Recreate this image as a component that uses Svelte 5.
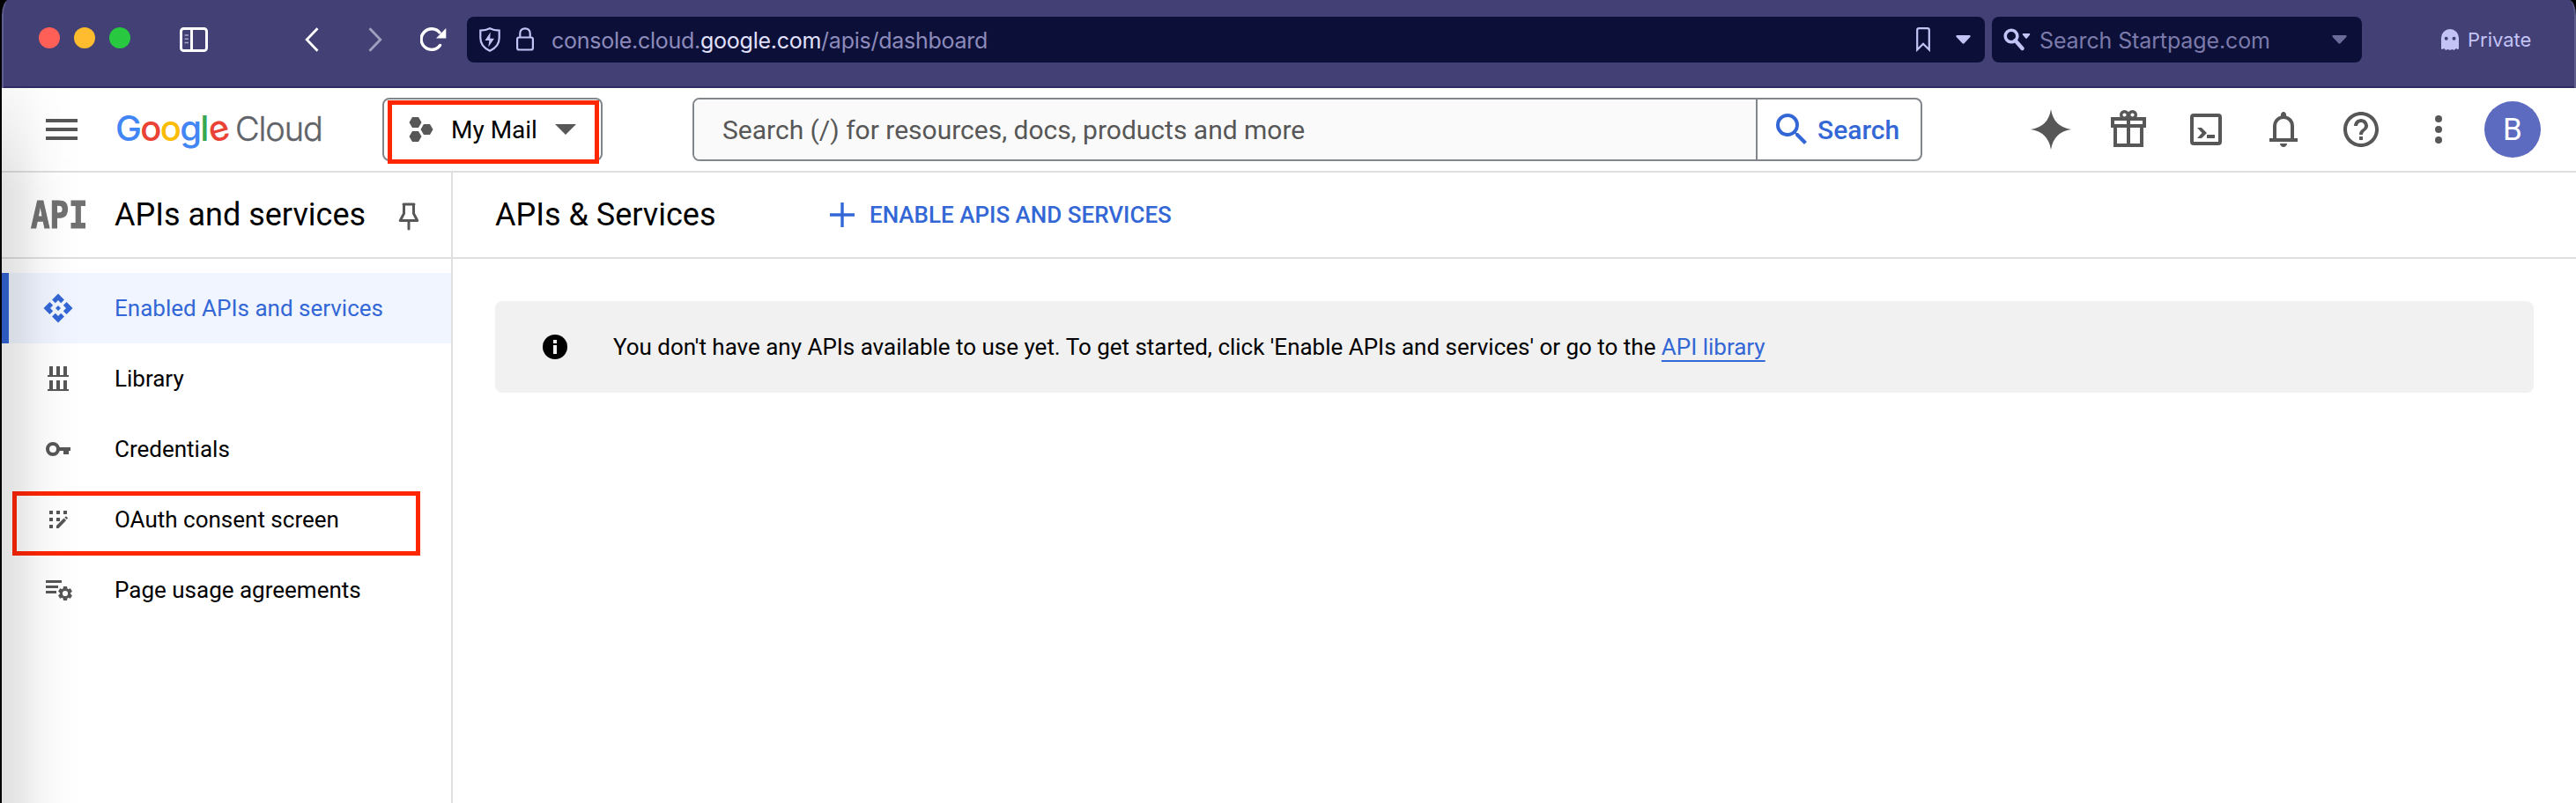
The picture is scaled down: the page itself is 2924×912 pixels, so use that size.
<script>
  const navItems = [
    { label: 'Enabled APIs and services', icon: 'api', active: true },
    { label: 'Library', icon: 'library' },
    { label: 'Credentials', icon: 'key' },
    { label: 'OAuth consent screen', icon: 'consent', marked: true },
    { label: 'Page usage agreements', icon: 'agreements' }
  ];
  const gearTeeth = [0, 60, 120];
</script>

<div class="window">
  <header class="chrome">
    <div class="lights"><i class="red"></i><i class="amber"></i><i class="green"></i></div>
    <svg class="panel" width="32" height="28" viewBox="0 0 32 28">
      <rect x="1.5" y="1.5" width="29" height="25" rx="3" fill="none" stroke="#fff" stroke-width="3" />
      <path d="M13.5 1v26" stroke="#fff" stroke-width="3" />
      <path d="M5.5 9h4.500M5.500 13.300h4.500M5.500 17.500h4.500" stroke="#a7a5c6" stroke-width="1.600" />
    </svg>
    <svg class="back" width="16" height="28" viewBox="0 0 16 28" fill="none" stroke="#fff" stroke-width="2.800"><path d="M14.500 1.200 2.200 14l12.300 12.800" /></svg>
    <svg class="fwd" width="16" height="28" viewBox="0 0 16 28" fill="none" stroke="#a09fbd" stroke-width="2.800"><path d="M1.500 1.200 13.800 14 1.500 26.800" /></svg>
    <svg class="reload" width="30" height="28" viewBox="0 0 30 28">
      <path d="M22.500 20.500A11.800 11.800 0 1 1 22 6" fill="none" stroke="#fff" stroke-width="3.400" stroke-linecap="round" />
      <path d="M29.300 1v11.500H18z" fill="#fff" />
    </svg>
    <div class="urlbar">
      <svg width="24" height="28" viewBox="0 0 24 28">
        <path d="M12 1.300c3.200 1.700 6.600 2.300 10.700 2.300V12c0 7-4 11.700-10.700 14.700C5.300 23.700 1.300 19 1.300 12V3.600C5.400 3.600 8.800 3 12 1.300z" fill="none" stroke="#c3c3f5" stroke-width="2.200" />
        <path d="M12.800 5.500 6.500 15h4.800l-1 7.500L17 12.700h-4.800z" fill="#c3c3f5" />
      </svg>
      <svg class="lock" width="20" height="28" viewBox="0 0 20 28" fill="none" stroke="#c3c3f5" stroke-width="2.200">
        <rect x="1.100" y="11.500" width="17.800" height="14" rx="2" /><path d="M4.300 11.500V7c0-3.400 2.300-5.700 5.700-5.700S15.700 3.600 15.700 7v4.500" />
      </svg>
      <span class="url">console.cloud.<b>google.com</b>/apis/dashboard</span>
      <svg class="mark" width="16" height="28" viewBox="0 0 16 28" fill="none" stroke="#c3c3f5" stroke-width="2.200"><path d="M1.200 25.500V3.200q0-2 2-2h9.600q2 0 2 2v22.300L8 18.700z" /></svg>
      <svg width="17" height="10" viewBox="0 0 17 10" fill="#c3c3f5"><path d="M1.500 0h14q1.800.3.800 2L9.500 9.300q-1 .9-2 0L.7 2q-1-1.700.8-2z" /></svg>
    </div>
    <div class="quick">
      <svg width="31" height="26" viewBox="0 0 31 26">
        <circle cx="9" cy="9" r="6.800" fill="none" stroke="#c3c3f5" stroke-width="3.600" />
        <path d="m13.500 14 8 9" stroke="#c3c3f5" stroke-width="4.400" stroke-linecap="round" />
        <path d="M22.500 6h7q1.300.2.500 1.500L26.800 11.500q-.8.800-1.600 0L21.900 7.500Q21.300 6.200 22.500 6z" fill="#c3c3f5" />
      </svg>
      <span>Search Startpage.com</span>
      <svg width="17" height="10" viewBox="0 0 17 10" fill="#6b6b9a"><path d="M1.500 0h14q1.800.3.800 2L9.500 9.300q-1 .9-2 0L.7 2q-1-1.700.8-2z" /></svg>
    </div>
    <div class="private">
      <svg width="20" height="24" viewBox="0 0 20 24">
        <path d="M0 10a10 10 0 0 1 20 0v12.500l-1.200.5-2-1-2 2-2.300-1-2.500 1-2.500-1-2.300 1-2-2-2 1L0 22.500z" fill="#c3c3f5" />
        <circle cx="5.700" cy="10.700" r="2" fill="#424075" /><circle cx="14.500" cy="10.700" r="2" fill="#424075" />
      </svg>
      <span>Private</span>
    </div>
  </header>

  <div class="page">
    <header class="topbar">
      <svg class="burger" width="36" height="24" viewBox="0 0 36 24" fill="#575757"><path d="M0 0h36v4H0zM0 10h36v4H0zM0 20h36v4H0z" /></svg>
      <div class="logo"><span class="goog"><span class="b">G</span><span class="r">o</span><span class="y">o</span><span class="b">g</span><span class="g">l</span><span class="r e">e</span></span><span class="cloud">Cloud</span></div>
      <div class="project">
        <svg width="28" height="28" viewBox="0 0 28 28" fill="#575757">
          <path d="M4 0h7l3.500 6-3.500 6H4L.5 6zM17 8h7l3.500 6-3.500 6h-7l-3.500-6zM4 16h7l3.500 6-3.500 6H4L.5 22z" />
        </svg>
        <span>My Mail</span>
        <svg class="caret" width="24" height="12" viewBox="0 0 24 12" fill="#575757"><path d="M0 0h24L12 12z" /></svg>
        <div class="outline"></div>
      </div>
      <div class="search">
        <div class="field">Search (/) for resources, docs, products and more</div>
        <div class="go">
          <svg width="48" height="48" viewBox="0 0 24 24" fill="#3367d6"><path d="M15.500 14h-.79l-.28-.27A6.471 6.471 0 0 0 16 9.500 6.500 6.500 0 1 0 9.500 16c1.610 0 3.090-.59 4.230-1.570l.27.28v.79l5 4.990L20.490 19l-4.990-5zm-6 0C7.010 14 5 11.990 5 9.500S7.010 5 9.500 5 14 7.010 14 9.500 11.990 14 9.500 14z" /></svg>
          <span>Search</span>
        </div>
      </div>
      <div class="tools">
        <svg width="48" height="48" viewBox="0 0 48 48"><path d="M24 1Q27 21 47 24 27 27 24 47 21 27 1 24 21 21 24 1z" fill="#575757" /></svg>
        <svg width="48" height="48" viewBox="0 0 48 48" fill="none" stroke="#575757" stroke-width="4">
          <path d="M6 12h36v8H6zM9 20v22h30V20M24 12v30" /><circle cx="19.500" cy="7.500" r="3.800" stroke-width="3.400" /><circle cx="28.500" cy="7.500" r="3.800" stroke-width="3.400" />
        </svg>
        <svg width="48" height="48" viewBox="0 0 48 48">
          <rect x="8" y="8" width="32" height="32" rx="2" fill="none" stroke="#575757" stroke-width="4" />
          <path d="M14 22h5l6 6-6 6h-5l5.500-6zM25 30h9v4h-9z" fill="#575757" />
        </svg>
        <svg width="48" height="48" viewBox="0 0 24 24" fill="#575757"><path fill-rule="evenodd" d="M4 19v-2h2v-7q0-2.075 1.250-3.687Q8.500 4.700 10.500 4.200v-.7q0-.625.438-1.062Q11.375 2 12 2t1.063.438q.437.437.437 1.062v.7q2 .5 3.250 2.112Q18 7.925 18 10v7h2v2ZM12 22q-.825 0-1.412-.587Q10 20.825 10 20h4q0 .825-.587 1.413Q12.825 22 12 22ZM8 17h8v-7q0-1.650-1.175-2.825Q13.650 6 12 6q-1.650 0-2.825 1.175Q8 8.350 8 10Z" /></svg>
        <svg width="48" height="48" viewBox="0 0 24 24" fill="#575757"><path d="M11 18h2v-2h-2v2zm1-16C6.480 2 2 6.480 2 12s4.480 10 10 10 10-4.480 10-10S17.520 2 12 2zm0 18c-4.410 0-8-3.590-8-8s3.590-8 8-8 8 3.590 8 8-3.590 8-8 8zm0-14c-2.210 0-4 1.790-4 4h2c0-1.100.9-2 2-2s2 .9 2 2c0 2-3 1.750-3 5h2c0-2.250 3-2.500 3-5 0-2.210-1.790-4-4-4z" /></svg>
        <svg width="48" height="48" viewBox="0 0 48 48" fill="#575757"><circle cx="24" cy="12" r="4" /><circle cx="24" cy="24" r="4" /><circle cx="24" cy="36" r="4" /></svg>
      </div>
      <div class="avatar">B</div>
    </header>

    <div class="body">
      <aside>
        <div class="product">
          <div class="apilogo"><span>API</span></div>
          <h2>APIs and services</h2>
          <svg width="24" height="32" viewBox="0 0 24 32" fill="none" stroke="#575757" stroke-width="3" stroke-linejoin="round" stroke-linecap="round">
            <path d="M6 2h12M6.500 2v10.500L2.300 20.500h19.400L17.500 12.500V2M12 21v9" />
          </svg>
        </div>
        <nav>
          {#each navItems as item}
            <div class="item" class:active={item.active}>
              <svg width="36" height="36" viewBox="0 0 36 36">
                {#if item.icon === 'api'}
                  <path transform="scale(1.500)" fill="#3367d6" d="M14 12l-2 2-2-2 2-2zM12 6l2.120 2.120 2.500-2.500L12 1 7.380 5.620l2.500 2.500zM6 12l2.120-2.120-2.500-2.500L1 12l4.620 4.620 2.500-2.500zM18 12l-2.120 2.120 2.500 2.500L23 12l-4.620-4.620-2.500 2.500zM12 18l-2.120-2.120-2.500 2.500L12 23l4.620-4.620-2.500-2.500z" />
                {:else if item.icon === 'library'}
                  <path fill="#575757" d="M6 14h24v2H6zM8 4h4v10H8zM16 4h4v10h-4zM24 4h4v10h-4zM6 30h24v2H6zM8 20h4v10H8zM16 20h4v10h-4zM24 20h4v10h-4z" />
                {:else if item.icon === 'key'}
                  <circle cx="12" cy="18" r="6" fill="none" stroke="#575757" stroke-width="4" />
                  <path fill="#575757" d="M18 16h14v4h-2v4h-6v-4h-6z" />
                {:else if item.icon === 'consent'}
                  <path fill="#575757" d="M8 8h4v4H8zM16 8h4v4h-4zM24 8h4v4h-4zM8 16h4v4H8zM16 16h4v4h-4zM8 24h4v4H8zM16 28v-3l8.500-8.500 2.600 2.600L18.500 28zM25.300 15.800l1-1q.7-.6 1.300 0l1 1q.6.600 0 1.300l-.8.900z" />
                {:else}
                  <path fill="#575757" d="M4 7h18v3H4zM4 13h14v3H4zM4 19h12v3H4z" />
                  <circle cx="26" cy="22" r="4.600" fill="none" stroke="#575757" stroke-width="3" />
                  {#each gearTeeth as angle}
                    <path fill="#575757" transform="rotate({angle} 26 22)" d="M24 14h4l.6 3h-5.200zM24 30h4l.6-3h-5.200z" />
                  {/each}
                {/if}
              </svg>
              <span>{item.label}</span>
              {#if item.marked}<div class="outline"></div>{/if}
            </div>
          {/each}
        </nav>
      </aside>

      <main>
        <div class="titlebar">
          <h1>APIs &amp; Services</h1>
          <svg width="28" height="28" viewBox="0 0 28 28" fill="#3367d6"><path d="M12.300 0h3.400v12.300H28v3.400H15.700V28h-3.400V15.700H0v-3.400h12.300z" /></svg>
          <span class="enable">ENABLE APIS AND SERVICES</span>
        </div>
        <div class="notice">
          <svg width="28" height="28" viewBox="0 0 28 28"><circle cx="14" cy="14" r="14" fill="#000" /><path d="M12 6h4v4h-4zM12 12h4v10h-4z" fill="#f1f1f1" /></svg>
          <p>You don't have any APIs available to use yet. To get started, click 'Enable APIs and services' or go to the <a href="#library">API library</a></p>
        </div>
      </main>
    </div>
  </div>
</div>

<style>
  :global(body) { background: #000; overflow: hidden; }
  .window { box-sizing: border-box; height: 912px; padding-left: 2px; display: flex; flex-direction: column; font-family: Roboto, sans-serif; color: #000; }
  svg { display: block; flex: none; }
  h1, h2, p { margin: 0; font-weight: 400; white-space: nowrap; }
  span { white-space: nowrap; }

  .chrome { box-sizing: border-box; height: 100px; flex: none; display: flex; align-items: center; padding: 0 0 8px 40px; background: #424075; border: solid #605e8d; border-width: 0 2px; border-radius: 8px 8px 0 0 / 18px 18px 0 0; box-shadow: inset 0 -2px #2f2c63; font-family: Inter, sans-serif; }
  .chrome > svg { position: relative; top: -1px; }
  .lights { display: flex; gap: 16px; position: relative; top: -3px; }
  .lights i { width: 24px; height: 24px; border-radius: 50%; }
  .red { background: #ff5f57; }
  .amber { background: #febc2e; }
  .green { background: #28c840; }
  .panel { margin-left: 56px; }
  .back { margin-left: 110px; }
  .fwd { margin-left: 56px; }
  .reload { margin-left: 43px; }
  .urlbar, .quick { box-sizing: border-box; height: 52px; display: flex; align-items: center; background: #0c1038; border-radius: 8px; position: relative; top: -1px; }
  .urlbar { width: 1723px; margin-left: 23px; padding: 0 16px 0 14px; }
  .lock { margin-left: 18px; }
  .url { margin-left: 20px; padding-top: 2px; flex: 1; font-size: 25px; letter-spacing: -0.26px; color: #8d8bbb; }
  .url b { font-weight: 400; color: #e2e1fd; }
  .mark { margin-right: 29px; }
  .quick { width: 420px; margin-left: 8px; padding: 0 17px 0 13px; }
  .quick span { flex: 1; margin-left: 10px; padding-top: 2px; font-size: 25px; letter-spacing: -0.12px; color: #7b7aab; }
  .private { display: flex; align-items: center; margin-left: 90px; position: relative; top: -1px; color: #c3c3f5; }
  .private span { margin-left: 10px; font-size: 22px; }

  .page { flex: 1; min-height: 0; display: flex; flex-direction: column; background: #fff; position: relative; }
  .page::after { content: ''; position: absolute; inset: 0 auto 0 0; width: 90px; pointer-events: none; background: linear-gradient(90deg, rgba(0, 0, 0, 0.12), rgba(0, 0, 0, 0.085) 25%, rgba(0, 0, 0, 0.035) 50%, rgba(0, 0, 0, 0.01) 75%, transparent); -webkit-mask-image: linear-gradient(rgba(0, 0, 0, 0.25), #000 120px); mask-image: linear-gradient(rgba(0, 0, 0, 0.25), #000 120px); }

  .topbar { box-sizing: border-box; height: 96px; flex: none; display: flex; align-items: center; padding: 0 40px 0 50px; border-bottom: 2px solid #dfdfdf; }
  .logo { width: 235px; margin-left: 43px; display: flex; align-items: baseline; font-family: Inter, sans-serif; position: relative; top: -2px; }
  .goog { width: 136px; font-size: 40px; font-weight: 500; letter-spacing: -1.700px; }
  .cloud { font-size: 38px; font-weight: 300; letter-spacing: -1.100px; color: #5f6368; -webkit-text-stroke: 0.4px #5f6368; }
  .logo .b { color: #4285f4; }
  .logo .r { color: #ea4335; }
  .logo .y { color: #fbbc04; }
  .logo .g { color: #34a853; }
  .logo .e { display: inline-block; transform: rotate(-16deg); }
  .project { box-sizing: border-box; width: 250px; height: 72px; margin-left: 68px; display: flex; align-items: center; padding-left: 28px; border: 2px solid #80868b; border-radius: 8px; position: relative; font-size: 28px; }
  .project span { width: 97px; margin-left: 20px; }
  .caret { margin-left: 21px; }
  .outline { position: absolute; box-sizing: border-box; border: 5px solid #ff2600; }
  .project .outline { left: 4px; top: 1px; width: 240px; height: 72px; }
  .search { box-sizing: border-box; width: 1396px; height: 72px; margin-left: 102px; display: flex; border: 2px solid #80868b; border-radius: 8px; overflow: hidden; font-size: 30px; }
  .field { flex: 1; display: flex; align-items: center; padding-left: 32px; background: #fafafa; color: #575757; }
  .go { box-sizing: border-box; width: 187px; display: flex; align-items: center; padding-left: 15px; border-left: 2px solid #80868b; color: #3367d6; font-weight: 500; }
  .go span { margin-left: 5px; padding-top: 1px; }
  .tools { display: flex; gap: 40px; margin-left: 122px; }
  .avatar { width: 64px; height: 64px; margin-left: 28px; display: grid; place-items: center; border-radius: 50%; background: #5c6bc0; color: #fff; font-size: 35px; }

  .body { flex: 1; min-height: 0; display: grid; grid-template-columns: 512px 1fr; }
  aside { box-sizing: border-box; border-right: 2px solid #dfdfdf; }
  .product, .titlebar { box-sizing: border-box; height: 98px; display: flex; align-items: center; border-bottom: 2px solid #dfdfdf; }
  .product { padding-left: 33px; }
  .apilogo { width: 64px; height: 42px; color: #717171; }
  .apilogo span { display: block; font: 700 43px/42px "DejaVu Sans Mono", monospace; -webkit-text-stroke: 1.200px #717171; transform: scaleX(0.83); transform-origin: 0 50%; }
  h1, h2 { font-size: 36px; line-height: 42px; }
  h2 { width: 286px; margin-left: 31px; }
  .product svg { margin-left: 36px; position: relative; top: 2px; }
  nav { padding-top: 16px; }
  .item { box-sizing: border-box; height: 80px; display: flex; align-items: center; padding-left: 46px; position: relative; font-size: 26px; }
  .item > span { margin-left: 46px; }
  .item.active { padding-left: 38px; border-left: 8px solid #3367d6; background: #f0f5ff; color: #3367d6; }
  .item .outline { left: 12px; top: 8px; width: 463px; height: 73px; }

  .titlebar { padding-left: 48px; }
  .titlebar svg { margin-left: 128px; }
  .enable { margin-left: 17px; color: #3367d6; font-size: 26px; font-weight: 500; }
  h1 { width: 252px; }
  .notice { box-sizing: border-box; height: 104px; margin: 48px 48px 0; display: flex; align-items: center; padding-left: 54px; border-radius: 8px; background: #f1f1f1; font-size: 26px; }
  .notice p { margin-left: 52px; letter-spacing: -0.01px; }
  a { color: #3367d6; text-decoration: underline 2px; text-underline-offset: 6px; text-decoration-skip-ink: none; }
</style>
